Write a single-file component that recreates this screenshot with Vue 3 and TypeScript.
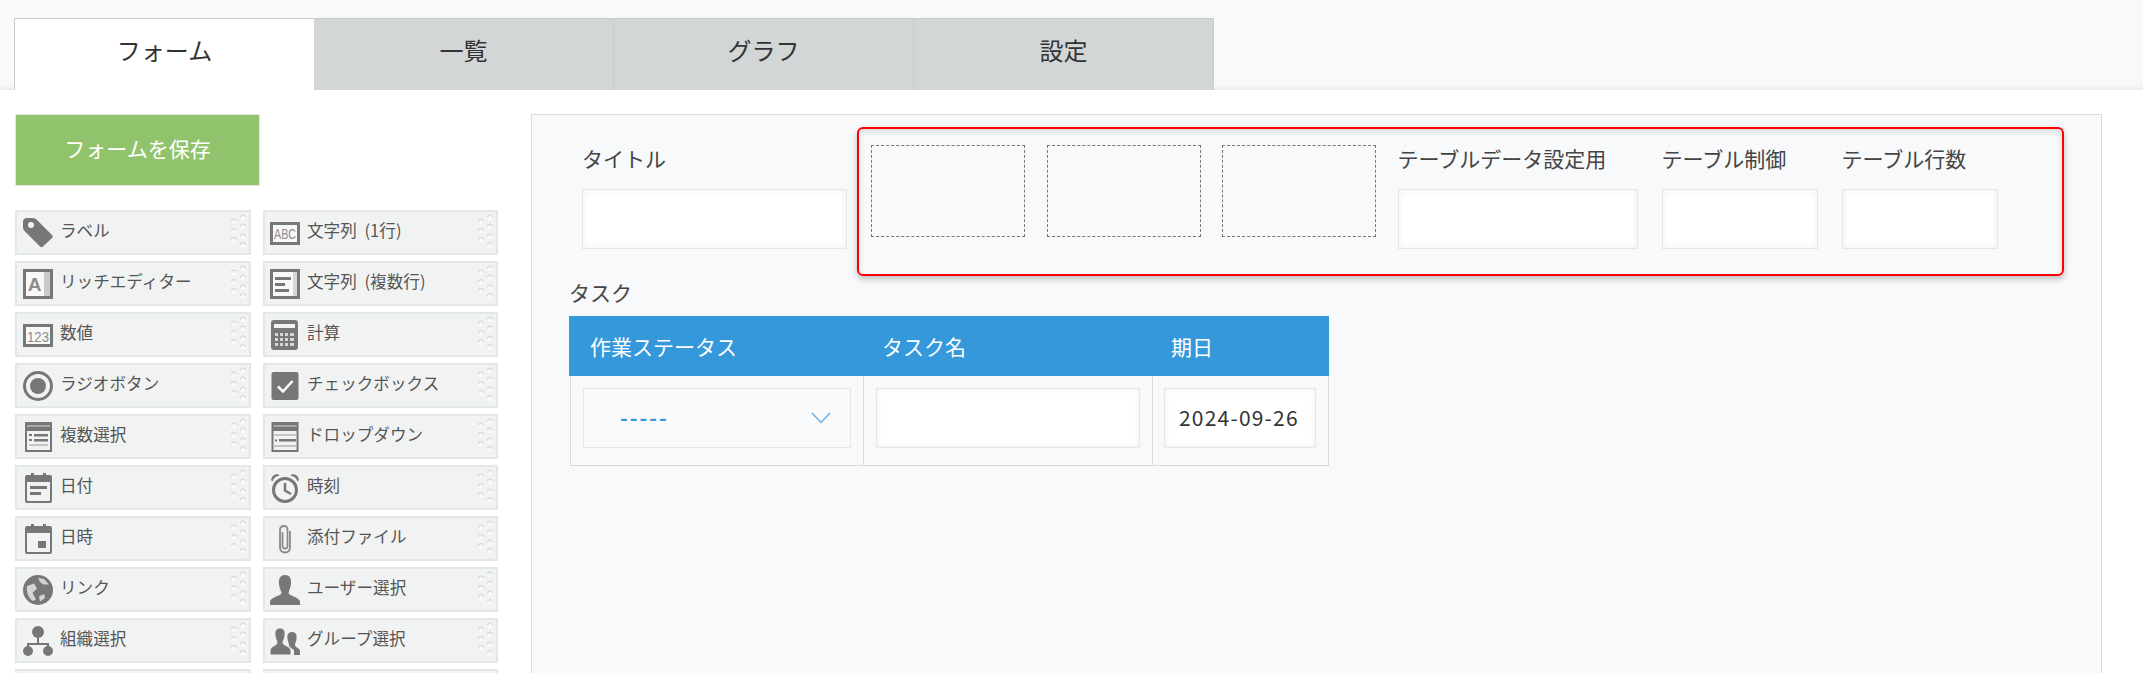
<script setup lang="ts">
interface Part {
  icon: string
  label: string
}

const tabs = ['フォーム', '一覧', 'グラフ', '設定']

const parts: Part[] = [
  { icon: 'tag', label: 'ラベル' },
  { icon: 'abc', label: '文字列 (1行)' },
  { icon: 'rich', label: 'リッチエディター' },
  { icon: 'multiline', label: '文字列 (複数行)' },
  { icon: 'number', label: '数値' },
  { icon: 'calc', label: '計算' },
  { icon: 'radio', label: 'ラジオボタン' },
  { icon: 'check', label: 'チェックボックス' },
  { icon: 'multi', label: '複数選択' },
  { icon: 'drop', label: 'ドロップダウン' },
  { icon: 'date', label: '日付' },
  { icon: 'time', label: '時刻' },
  { icon: 'datetime', label: '日時' },
  { icon: 'clip', label: '添付ファイル' },
  { icon: 'globe', label: 'リンク' },
  { icon: 'user', label: 'ユーザー選択' },
  { icon: 'org', label: '組織選択' },
  { icon: 'group', label: 'グループ選択' },
  { icon: '', label: '' },
  { icon: '', label: '' },
]

// grip marks on the right of each palette item
const gripDots = [
  [4, 11.5], [4, 21], [4, 30],
  [13, 7.5], [13, 16.5], [13, 26.5], [13, 35],
]

const fields = [
  { label: 'テーブルデータ設定用', width: 240 },
  { label: 'テーブル制御', width: 156 },
  { label: 'テーブル行数', width: 156 },
]
</script>

<template>
  <div class="page">
    <div class="tabbar">
      <div v-for="(tab, i) in tabs" :key="tab" class="tab" :class="{ active: i === 0 }">{{ tab }}</div>
    </div>

    <div class="body">
      <aside class="sidebar">
        <button class="save"><span class="save-text">フォームを保存</span></button>
        <div class="palette">
          <div v-for="(part, i) in parts" :key="i" class="part">
            <svg v-if="part.icon" class="icon" viewBox="0 0 30 30" width="30" height="30">
              <template v-if="part.icon === 'tag'">
                <path fill-rule="evenodd" d="M4 0H10Q12 0 13.5 1.5L29 17Q30.500 18.500 29 20L20 28.500Q18.500 30 17 28.500L1.500 13Q0 11.500 0 9.500V4Q0 0 4 0ZM8 4A3 3 0 1 0 8 10A3 3 0 1 0 8 4Z" />
              </template>
              <template v-else-if="part.icon === 'abc'">
                <rect x="1.500" y="5.500" width="27" height="20" class="frame" />
                <text x="15" y="20.500" class="glyph" text-anchor="middle" font-size="14" textLength="22" lengthAdjust="spacingAndGlyphs">ABC</text>
              </template>
              <template v-else-if="part.icon === 'number'">
                <rect x="1.500" y="5.500" width="27" height="20" class="frame" />
                <text x="15" y="21.500" class="glyph" text-anchor="middle" font-size="14" textLength="22" lengthAdjust="spacingAndGlyphs">123</text>
              </template>
              <template v-else-if="part.icon === 'rich'">
                <rect x="1.500" y="1.500" width="27" height="27" class="frame" />
                <rect x="21" y="3" width="6" height="24" fill="#c9cbcb" />
                <text x="11.500" y="22" class="glyph bold" text-anchor="middle" font-size="19">A</text>
              </template>
              <template v-else-if="part.icon === 'multiline'">
                <rect x="1.500" y="1.500" width="27" height="27" class="frame" />
                <rect x="23" y="3" width="4" height="24" fill="#d5d7d7" />
                <rect x="5" y="8" width="16" height="3" />
                <rect x="5" y="14" width="10" height="3" />
                <rect x="5" y="20" width="14" height="3" />
              </template>
              <template v-else-if="part.icon === 'calc'">
                <path fill-rule="evenodd" d="M4 0H25Q28 0 28 3V27Q28 30 25 30H4Q1 30 1 27V3Q1 0 4 0ZM4 4V8H25V4Z" />
                <path fill="#d5d7d7" d="M5 13h3v3h-3zM10 13h3v3h-3zM15 13h3v3h-3zM20 13h4v3h-4zM5 18h3v3h-3zM10 18h3v3h-3zM15 18h3v3h-3zM20 18h4v3h-4zM5 23h3v3h-3zM10 23h3v3h-3zM15 23h3v3h-3zM20 23h4v3h-4z" />
              </template>
              <template v-else-if="part.icon === 'radio'">
                <circle cx="15" cy="15" r="13.500" fill="none" stroke="#777" stroke-width="3" />
                <circle cx="15" cy="15" r="8" />
              </template>
              <template v-else-if="part.icon === 'check'">
                <rect x="1.500" y="1" width="27" height="28" rx="2" />
                <path d="M8 15.500L13 20.500L22.500 10" fill="none" stroke="#fff" stroke-width="2.500" />
              </template>
              <template v-else-if="part.icon === 'multi'">
                <path fill-rule="evenodd" d="M2 0H29V30H2ZM4 9V28H27V9Z" />
                <rect x="4" y="3" width="23" height="2" fill="#a8a8a8" />
                <rect x="4" y="9" width="23" height="19" fill="#f1f3f3" />
                <rect x="6" y="12" width="3" height="2" />
                <rect x="11" y="12" width="14" height="2.500" />
                <rect x="6" y="17" width="3" height="2" />
                <rect x="11" y="17" width="14" height="2.500" />
                <rect x="6" y="22" width="19" height="2" fill="#c4c4c4" />
              </template>
              <template v-else-if="part.icon === 'drop'">
                <path fill-rule="evenodd" d="M1.500 0H28.500V30H1.500ZM3.500 9V28H26.500V9Z" />
                <rect x="3.500" y="3" width="23" height="2" fill="#a8a8a8" />
                <rect x="3.500" y="12" width="23" height="2" fill="#c4c4c4" />
                <rect x="5" y="17.500" width="2" height="2" />
                <rect x="9" y="17" width="17" height="2.500" />
                <rect x="3.500" y="23" width="23" height="2" fill="#c4c4c4" />
              </template>
              <template v-else-if="part.icon === 'date'">
                <path fill-rule="evenodd" d="M4 2H8V0H11V2H20V0H23V2H27Q29 2 29 4V28Q29 30 27 30H4Q2 30 2 28V4Q2 2 4 2ZM4 9V27Q4 28 5 28H26Q27 28 27 27V9Z" />
                <rect x="7" y="13" width="17" height="3" />
                <rect x="7" y="19" width="11" height="3" />
              </template>
              <template v-else-if="part.icon === 'datetime'">
                <path fill-rule="evenodd" d="M4 2H8V0H11V2H20V0H23V2H27Q29 2 29 4V28Q29 30 27 30H4Q2 30 2 28V4Q2 2 4 2ZM4 9V27Q4 28 5 28H26Q27 28 27 27V9Z" />
                <rect x="15" y="17" width="8" height="7" />
              </template>
              <template v-else-if="part.icon === 'time'">
                <circle cx="15" cy="17" r="11.500" fill="none" stroke="#777" stroke-width="3" />
                <path d="M15 10V17.500L21 21" fill="none" stroke="#777" stroke-width="2.500" />
                <path d="M1 7Q2 1 8 1L9.500 2.500Q4 3.500 2.500 8.500ZM29 7Q28 1 22 1L20.500 2.500Q26 3.500 27.500 8.500Z" />
              </template>
              <template v-else-if="part.icon === 'clip'">
                <path d="M12.500 8V22Q12.500 24.500 15 24.500Q17.500 24.500 17.500 22V6Q17.500 2 14.500 2Q10 2 10 6V23Q10 28.500 15 28.500Q20 28.500 20 23V7" fill="none" stroke="#8a8a8a" stroke-width="1.800" />
              </template>
              <template v-else-if="part.icon === 'globe'">
                <circle cx="15" cy="15" r="15" />
                <path fill="#d3d5d5" d="M4 11L11 8.500L14 13.500L9.500 18L13 24.500L9.500 26Q2.500 20 4 11ZM15 3L21 4L26 9.500L20.500 9.500L17 7ZM16 21.500L21 19L22 23L17 26.500Z" />
              </template>
              <template v-else-if="part.icon === 'user'">
                <path d="M15 0C10 0 8.500 4 9 9C9.300 13 11 15 11.500 18C11.500 21 0 22 0 27V30H30V27C30 22 18.500 21 18.500 18C19 15 20.700 13 21 9C21.500 4 20 0 15 0Z" />
              </template>
              <template v-else-if="part.icon === 'org'">
                <circle cx="15" cy="6" r="6" />
                <path d="M14 10H16V17H26V24H24V19H6V24H4V17H14Z" />
                <circle cx="5" cy="25" r="5" />
                <circle cx="25" cy="25" r="5" />
              </template>
              <template v-else-if="part.icon === 'group'">
                <path d="M22 6C18 6 17 9 17.500 13C18 16 19 17 19 19C19 21 21 22 24 24V29H30V25C30 22 25 21.500 25 19C25 17 26 16 26.500 13C27 9 26 6 22 6Z" />
                <path stroke="#f1f3f3" d="M10 2C6 2 4.500 5 5 10C5.500 13 7 14.500 7 17C7 19.500 0 20 0 25V29H21V25C21 20 13 19.500 13 17C13 14.500 14.500 13 15 10C15.500 5 14 2 10 2Z" />
              </template>
            </svg>
            <span class="part-label">{{ part.label }}</span>
            <svg class="grip" viewBox="0 0 17 45" width="17" height="45">
              <g v-for="dot in gripDots" :key="dot.join()">
                <circle :cx="dot[0]" :cy="dot[1]" r="2.600" fill="#f9fafa" />
                <path :d="`M${dot[0] - 2.4} ${dot[1]}a2.400 2.400 0 0 1 4.800 0`" fill="none" stroke="#d8dbdb" stroke-width="1.300" />
              </g>
            </svg>
          </div>
        </div>
      </aside>

      <main class="panel">
        <div class="field-row">
          <div class="field first">
            <div class="field-label">タイトル</div>
            <div class="input" style="width: 265px"></div>
          </div>
          <div class="spacer"></div>
          <div class="spacer"></div>
          <div class="spacer"></div>
          <div v-for="field in fields" :key="field.label" class="field">
            <div class="field-label">{{ field.label }}</div>
            <div class="input" :style="{ width: field.width + 'px' }"></div>
          </div>
        </div>

        <div class="task">
          <div class="task-label">タスク</div>
          <div class="table-head">
            <div class="th col-status">作業ステータス</div>
            <div class="th col-name">タスク名</div>
            <div class="th col-due">期日</div>
          </div>
          <div class="table-row">
            <div class="td col-status">
              <div class="select">
                <span class="select-value">-----</span>
                <svg class="chevron" viewBox="0 0 20 12" width="20" height="12">
                  <path d="M1 1L10 10.500L19 1" fill="none" stroke="#6fb1e2" stroke-width="1.500" />
                </svg>
              </div>
            </div>
            <div class="td col-name">
              <div class="input name-input"></div>
            </div>
            <div class="td col-due">
              <div class="input date-input">2024-09-26</div>
            </div>
          </div>
        </div>

        <!-- annotation drawn on top of the fields -->
        <div class="highlight"></div>
      </main>
    </div>
  </div>
</template>

<style>
html,
body {
  margin: 0;
  overflow: hidden;
  background: #fff;
}
</style>

<style scoped>
.page {
  height: 673px;
  overflow: hidden;
  font-family: "Noto Sans CJK JP", "Noto Sans", sans-serif;
  color: #444;
}

.tabbar {
  display: flex;
  height: 72px;
  padding: 18px 0 0 14px;
  background: #f7f9fa;
  box-shadow: inset 0 -7px 7px -7px rgba(0, 0, 0, 0.12);
}

.tab {
  box-sizing: border-box;
  width: 300px;
  display: flex;
  align-items: center;
  justify-content: center;
  padding-bottom: 10px;
  font-size: 24px;
  color: #333;
  background: #d3d6d7;
  border-top: 1px solid #c8cccd;
  border-right: 1px solid #c8cdce;
}

.tab.active {
  background: #fff;
  border-left: 1px solid #c8cccd;
  border-right: 0;
}

.body {
  display: flex;
  align-items: flex-start;
}

.sidebar {
  width: 483px;
  margin: 24px 0 0 15px;
  flex: none;
}

.save {
  display: flex;
  align-items: center;
  justify-content: center;
  box-sizing: border-box;
  width: 245px;
  height: 72px;
  padding: 0;
  font: inherit;
  font-size: 21px;
  color: #fff;
  background: #91c36c;
  border: 1px solid #e3e7e8;
}

.save-text {
  margin-bottom: 4px;
}

.palette {
  display: grid;
  grid-template-columns: 236px 235px;
  column-gap: 12px;
  row-gap: 6px;
  margin-top: 24px;
}

.part {
  box-sizing: border-box;
  position: relative;
  display: flex;
  height: 45px;
  padding: 6px 0 0 6px;
  background: #f1f3f3;
  border: 2px solid #e3e7e8;
}

.part:nth-child(even) {
  padding-left: 5px;
}

.icon {
  flex: none;
  fill: #777;
}

.frame {
  fill: #f8f8f8;
  stroke: #777;
  stroke-width: 3;
}

.glyph {
  fill: #8c8c8c;
  font-family: "Liberation Sans", sans-serif;
}

.glyph.bold {
  font-weight: 700;
}

.part-label {
  margin-left: 7px;
  font-size: 16.6px;
  line-height: 24px;
  word-spacing: 4px;
  white-space: nowrap;
  color: #555;
}

.grip {
  position: absolute;
  top: -2px;
  right: 2px;
}

.panel {
  position: relative;
  box-sizing: border-box;
  flex: none;
  width: 1571px;
  height: 600px;
  margin: 24px 0 0 33px;
  padding: 30px 0 0 50px;
  background: #f7f9fa;
  border: 1px solid #d8dee0;
}

.field-row {
  display: flex;
  gap: 21.5px;
}

.field.first {
  margin-right: 2.5px;
}

.field + .field {
  margin-left: 2.5px;
}

.field-label {
  height: 28px;
  margin-bottom: 16px;
  font-size: 21px;
  line-height: 26px;
  white-space: nowrap;
}

.input {
  box-sizing: border-box;
  height: 60px;
  background: #fff;
  border: 1px solid #e3e7e8;
  box-shadow: inset 0 0 6px rgba(0, 0, 0, 0.07);
}

.spacer {
  box-sizing: border-box;
  width: 154px;
  height: 92px;
  border: 1px dashed #777;
}

.task {
  margin: 29px 0 0 -13px;
}

.task-label {
  height: 30px;
  margin-bottom: 8px;
  font-size: 21px;
  line-height: 28px;
}

.table-head {
  display: flex;
  width: 760px;
  height: 60px;
  background: #3498db;
}

.th {
  box-sizing: border-box;
  padding: 15px 0 0 21px;
  font-size: 21px;
  line-height: 30px;
  color: #fff;
}

.th.col-name {
  padding-left: 19px;
}

.th.col-due {
  padding-left: 19px;
}

.col-status {
  width: 294px;
}

.col-name {
  width: 289px;
}

.col-due {
  width: 177px;
}

.table-row {
  display: flex;
  width: 758px;
  margin-left: 1px;
  border-bottom: 1px solid #d8dcdd;
  border-right: 1px solid #d8dcdd;
}

.td {
  box-sizing: border-box;
  height: 89px;
  padding: 12px 0 0 12px;
  border-left: 1px solid #d8dcdd;
}

.td.col-status {
  width: 293px;
}

.td.col-due {
  width: 176px;
  padding-left: 11px;
}

.select {
  box-sizing: border-box;
  display: flex;
  align-items: center;
  justify-content: space-between;
  width: 268px;
  height: 60px;
  padding: 0 19px 0 36px;
  background: #f9fafb;
  border: 1px solid #e3e7e8;
  color: #3498db;
  font-size: 21px;
  font-weight: 700;
}

.select-value {
  line-height: 1;
  letter-spacing: 2px;
  position: relative;
  top: -1px;
}

.name-input {
  width: 264px;
}

.date-input {
  width: 152px;
  padding-left: 14px;
  font-size: 21px;
  line-height: 56px;
  letter-spacing: 1.2px;
  color: #333;
  white-space: nowrap;
}

.highlight {
  position: absolute;
  box-sizing: border-box;
  top: 12px;
  left: 325px;
  width: 1207px;
  height: 149px;
  border: 2px solid #f00;
  border-radius: 6px;
  box-shadow: 0 3px 6px rgba(0, 0, 0, 0.25), inset 0 3px 6px rgba(0, 0, 0, 0.12);
  pointer-events: none;
}
</style>
